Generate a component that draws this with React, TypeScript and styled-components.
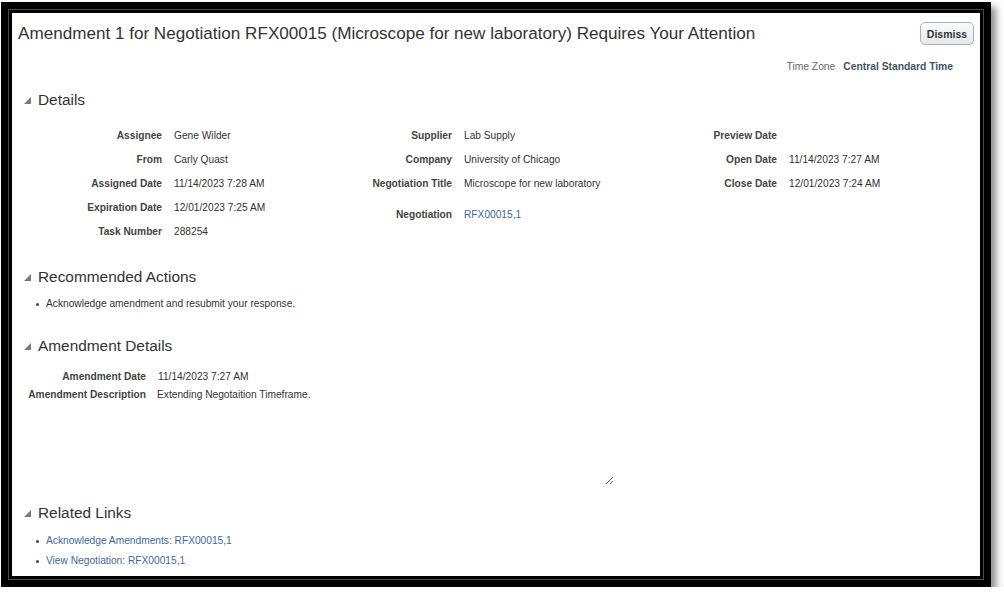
import * as React from "react";
import styled, { createGlobalStyle } from "styled-components";

const GlobalStyle = createGlobalStyle`
  html, body {
    margin: 0;
    padding: 0;
    background: #ffffff;
  }
  body {
    font-family: "Liberation Sans", Arial, sans-serif;
    color: #333333;
  }
`;

const Frame = styled.div`
  margin: 2px 0 0 1px;
  width: 974px;
  border: 7px solid #000;
  padding: 1px;
  background: #4a4a4a;
  box-shadow: 5px 5px 7px rgba(0, 0, 0, 0.45);
`;

const Panel = styled.div`
  border: 3px solid #000;
  background: #fff;
  height: 563px;
  box-sizing: content-box;
  overflow: hidden;
`;

const Header = styled.div`
  display: flex;
  justify-content: space-between;
  align-items: center;
  padding: 9px 6px 0 6px;
  height: 23px;
`;

const Title = styled.h1`
  margin: 0;
  font-size: 17.1px;
  font-weight: normal;
  color: #333;
  white-space: nowrap;
`;

const Button = styled.button`
  height: 23px;
  width: 54px;
  padding: 0;
  border: 1px solid #a9b1ba;
  border-radius: 5px;
  background: linear-gradient(#fafbfc, #e6e9ec);
  font-family: inherit;
  font-size: 10.5px;
  font-weight: bold;
  color: #333;
`;

const TimeZone = styled.div`
  display: flex;
  justify-content: flex-end;
  gap: 8px;
  margin-top: 15px;
  padding-right: 27px;
  font-size: 10.3px;
  line-height: 14px;
`;

const ZoneLabel = styled.span`
  color: #6b6b6b;
`;

const ZoneValue = styled.span`
  font-weight: bold;
  color: #3d5566;
`;

const SectionHead = styled.div<{ $gap: number }>`
  display: flex;
  align-items: center;
  gap: 7px;
  margin-top: ${(p) => p.$gap}px;
  padding-left: 12px;
  height: 20px;
  font-size: 15.4px;
  color: #333;
`;

const Disclosure = () => (
  <svg width="7" height="7" viewBox="0 0 7 7">
    <polygon points="7,0 7,7 0,7" fill="#7a7a7a" />
  </svg>
);

const DetailGrid = styled.div`
  display: grid;
  grid-template-columns: 290px 325px 1fr;
  margin-top: 14px;
  font-size: 10.2px;
`;

const FieldList = styled.div<{ $label: number }>`
  display: grid;
  grid-template-columns: ${(p) => p.$label}px 1fr;
  column-gap: 12px;
  align-content: start;
`;

const Label = styled.div<{ $h?: number; $pad?: number }>`
  text-align: right;
  font-weight: bold;
  color: #444;
  line-height: ${(p) => p.$h ?? 24}px;
  padding-top: ${(p) => p.$pad ?? 0}px;
  white-space: nowrap;
`;

const Value = styled.div<{ $h?: number; $pad?: number }>`
  line-height: ${(p) => p.$h ?? 24}px;
  padding-top: ${(p) => p.$pad ?? 0}px;
  color: #333;
  white-space: nowrap;
`;

const Link = styled.a`
  color: #3c6b9c;
  text-decoration: none;
  cursor: pointer;
`;

const Bullets = styled.ul<{ $gap: number; $row: number }>`
  margin: ${(p) => p.$gap}px 0 0 0;
  padding: 0 0 0 34px;
  list-style: none;
  font-size: 10.2px;

  li {
    position: relative;
    line-height: ${(p) => p.$row}px;
  }

  li::before {
    content: "";
    position: absolute;
    left: -10px;
    top: 50%;
    width: 3px;
    height: 3px;
    margin-top: -1px;
    border-radius: 50%;
    background: #444;
  }
`;

const AmendGrid = styled(FieldList)`
  margin-top: 12px;
  font-size: 10.2px;
`;

const Description = styled.textarea`
  width: 457px;
  height: 99px;
  margin: 0 0 0 -1px;
  padding: 0;
  border: none;
  outline: none;
  resize: both;
  font-family: inherit;
  font-size: 10.2px;
  line-height: 18px;
  color: #333;
  background: transparent;
`;

const details: [string, React.ReactNode, boolean?][][] = [
  [
    ["Assignee", "Gene Wilder"],
    ["From", "Carly Quast"],
    ["Assigned Date", "11/14/2023 7:28 AM"],
    ["Expiration Date", "12/01/2023 7:25 AM"],
    ["Task Number", "288254"],
  ],
  [
    ["Supplier", "Lab Supply"],
    ["Company", "University of Chicago"],
    ["Negotiation Title", "Microscope for new laboratory"],
    ["Negotiation", <Link>RFX00015,1</Link>, true],
  ],
  [
    ["Preview Date", ""],
    ["Open Date", "11/14/2023 7:27 AM"],
    ["Close Date", "12/01/2023 7:24 AM"],
  ],
];

export default function App() {
  return (
    <>
      <GlobalStyle />
      <Frame>
        <Panel>
          <Header>
            <Title>
              Amendment 1 for Negotiation RFX00015 (Microscope for new
              laboratory) Requires Your Attention
            </Title>
            <Button>Dismiss</Button>
          </Header>
          <TimeZone>
            <ZoneLabel>Time Zone</ZoneLabel>
            <ZoneValue>Central Standard Time</ZoneValue>
          </TimeZone>

          <SectionHead $gap={16}>
            <Disclosure />
            Details
          </SectionHead>
          <DetailGrid>
            {details.map((col, i) => (
              <FieldList key={i} $label={150}>
                {col.map(([label, value, tall]) => (
                  <React.Fragment key={label}>
                    <Label $pad={tall ? 7 : 0}>{label}</Label>
                    <Value $pad={tall ? 7 : 0}>{value}</Value>
                  </React.Fragment>
                ))}
              </FieldList>
            ))}
          </DetailGrid>

          <SectionHead $gap={23}>
            <Disclosure />
            Recommended Actions
          </SectionHead>
          <Bullets $gap={8} $row={18}>
            <li>Acknowledge amendment and resubmit your response.</li>
          </Bullets>

          <SectionHead $gap={23}>
            <Disclosure />
            Amendment Details
          </SectionHead>
          <AmendGrid $label={134}>
            <Label $h={18}>Amendment Date</Label>
            <Value $h={18}>11/14/2023 7:27 AM</Value>
            <Label $h={18}>Amendment Description</Label>
            <div>
              <Description
                readOnly
                defaultValue="Extending Negotaition Timeframe."
              />
            </div>
          </AmendGrid>

          <SectionHead $gap={16}>
            <Disclosure />
            Related Links
          </SectionHead>
          <Bullets $gap={8} $row={20}>
            <li>
              <Link>Acknowledge Amendments: RFX00015,1</Link>
            </li>
            <li>
              <Link>View Negotiation: RFX00015,1</Link>
            </li>
          </Bullets>
        </Panel>
      </Frame>
    </>
  );
}
